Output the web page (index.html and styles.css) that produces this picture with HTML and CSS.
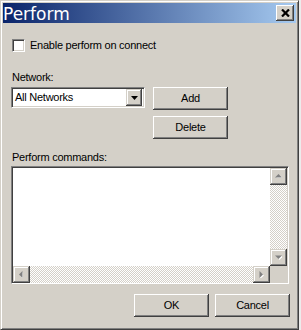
FILE: index.html
```html
<!DOCTYPE html>
<html>
<head>
<meta charset="utf-8">
<link rel="stylesheet" href="styles.css">
</head>
<body>
<div class="window">
  <div class="titlebar">
    <span class="title">Perform</span>
    <div class="close-btn">
      <svg width="9" height="8" viewBox="0 0 9 8"><path d="M1 0.5 L8 7.5 M8 0.5 L1 7.5" stroke="#000" stroke-width="2.2" fill="none"/></svg>
    </div>
  </div>
  <div class="client">
    <div class="check-row">
      <span class="checkbox"></span>
      <span>Enable perform on connect</span>
    </div>
    <div class="net-row">
      <div class="net-left">
        <div class="label">Network:</div>
        <div class="combo">
          <span class="combo-text">All Networks</span>
          <span class="combo-btn">
            <svg width="7" height="4" viewBox="0 0 7 4"><path d="M0 0 H7 L3.5 4 Z" fill="#000"/></svg>
          </span>
        </div>
      </div>
      <div class="btn-col">
        <div class="btn">Add</div>
        <div class="btn">Delete</div>
      </div>
    </div>
    <div class="label cmd-label">Perform commands:</div>
    <div class="textarea">
      <div class="ta-content"></div>
      <div class="vscroll">
        <div class="sbtn">
          <svg width="7" height="5" viewBox="0 0 7 5"><path d="M1 4 H8 L4.5 1 Z" fill="#fff"/><path d="M0 3.5 H7 L3.5 0 Z" fill="#808080"/></svg>
        </div>
        <div class="track"></div>
        <div class="sbtn">
          <svg width="7" height="5" viewBox="0 0 7 5"><path d="M1 1 H8 L4.5 5 Z" fill="#fff"/><path d="M0 0.5 H7 L3.5 4 Z" fill="#808080"/></svg>
        </div>
      </div>
      <div class="hscroll">
        <div class="sbtn">
          <svg width="5" height="7" viewBox="0 0 5 7"><path d="M4 1 V8 L1 4.5 Z" fill="#fff"/><path d="M3.5 0 V7 L0 3.5 Z" fill="#808080"/></svg>
        </div>
        <div class="track"></div>
        <div class="sbtn">
          <svg width="5" height="7" viewBox="0 0 5 7"><path d="M1 1 V8 L5 4.5 Z" fill="#fff"/><path d="M0.5 0 V7 L4 3.5 Z" fill="#808080"/></svg>
        </div>
      </div>
      <div class="corner"></div>
    </div>
    <div class="footer">
      <div class="btn">OK</div>
      <div class="btn">Cancel</div>
    </div>
  </div>
</div>
</body>
</html>
```
FILE: styles.css
```css
html, body {
  margin: 0;
  padding: 0;
  background: #ececec;
}
body {
  font-family: "Liberation Sans", Arial, sans-serif;
  font-size: 11px;
  line-height: 13px;
  letter-spacing: -0.25px;
  color: #000;
}
.window {
  box-sizing: border-box;
  width: 299px;
  height: 330px;
  background: #d4d0c8;
  border: 1px solid;
  border-color: #d4d0c8 #404040 #404040 #d4d0c8;
  box-shadow: inset 1px 1px #fff, inset -1px -1px #808080;
  padding: 2px;
}
.titlebar {
  height: 20px;
  display: flex;
  align-items: center;
  justify-content: space-between;
  background: linear-gradient(to right, #0a246a, #a6caf0);
}
.title {
  font-family: "DejaVu Sans", Verdana, sans-serif;
  font-size: 17px;
  line-height: 20px;
  letter-spacing: 0;
  color: #fff;
  padding-top: 1px;
}
.close-btn {
  box-sizing: border-box;
  width: 18px;
  height: 16px;
  margin-right: 2px;
  background: #d4d0c8;
  box-shadow: inset -1px -1px #404040, inset 1px 1px #fff, inset -2px -2px #808080, inset 2px 2px #d4d0c8;
  display: flex;
  align-items: center;
  justify-content: center;
  padding-left: 1px;
}
.client {
  padding: 16px 6px 0 8px;
}
.check-row {
  display: flex;
  align-items: center;
  gap: 5px;
  height: 13px;
  margin-left: 1px;
}
.checkbox {
  box-sizing: border-box;
  width: 13px;
  height: 13px;
  background: #fff;
  border: 1px solid;
  border-color: #808080 #fff #fff #808080;
  box-shadow: inset 1px 1px #404040, inset -1px -1px #d4d0c8;
}
.net-row {
  display: flex;
  gap: 8px;
  margin-top: 19px;
}
.label {
  height: 13px;
  padding-left: 1px;
}
.combo {
  box-sizing: border-box;
  margin-top: 3px;
  width: 134px;
  height: 21px;
  background: #fff;
  border: 1px solid;
  border-color: #808080 #fff #fff #808080;
  box-shadow: inset 1px 1px #404040, inset -1px -1px #d4d0c8;
  padding: 2px 2px 2px 3px;
  display: flex;
  align-items: center;
  justify-content: space-between;
}
.combo-btn {
  box-sizing: border-box;
  width: 16px;
  height: 17px;
  background: #d4d0c8;
  box-shadow: inset -1px -1px #404040, inset 1px 1px #d4d0c8, inset -2px -2px #808080, inset 2px 2px #fff;
  display: flex;
  align-items: center;
  justify-content: center;
}
.btn-col {
  margin-top: 16px;
  display: flex;
  flex-direction: column;
  gap: 6px;
}
.btn {
  box-sizing: border-box;
  width: 75px;
  height: 23px;
  background: #d4d0c8;
  box-shadow: inset -1px -1px #404040, inset 1px 1px #fff, inset -2px -2px #808080, inset 2px 2px #d4d0c8;
  display: flex;
  align-items: center;
  justify-content: center;
}
.cmd-label {
  margin-top: 12px;
}
.textarea {
  box-sizing: border-box;
  margin-top: 2px;
  width: 278px;
  height: 118px;
  border: 1px solid;
  border-color: #808080 #fff #fff #808080;
  background: #d4d0c8;
  padding: 1px 1px 0 1px;
  box-shadow: inset 1px 1px #404040;
  display: grid;
  grid-template-columns: 1fr 17px;
  grid-template-rows: 1fr 17px;
}
.ta-content {
  background: #fff;
}
.vscroll {
  display: flex;
  flex-direction: column;
}
.hscroll {
  display: flex;
}
.sbtn {
  box-sizing: border-box;
  width: 17px;
  height: 17px;
  flex: none;
  background: #d4d0c8;
  box-shadow: inset -1px -1px #404040, inset 1px 1px #d4d0c8, inset -2px -2px #808080, inset 2px 2px #fff;
  display: flex;
  align-items: center;
  justify-content: center;
}
.track {
  flex: 1;
  background: repeating-conic-gradient(#d4d0c8 0 25%, #fff 0 50%) 0 0 / 2px 2px;
}
.corner {
  background: #d4d0c8;
}
.footer {
  margin-top: 10px;
  display: flex;
  justify-content: flex-end;
  gap: 6px;
}
```
